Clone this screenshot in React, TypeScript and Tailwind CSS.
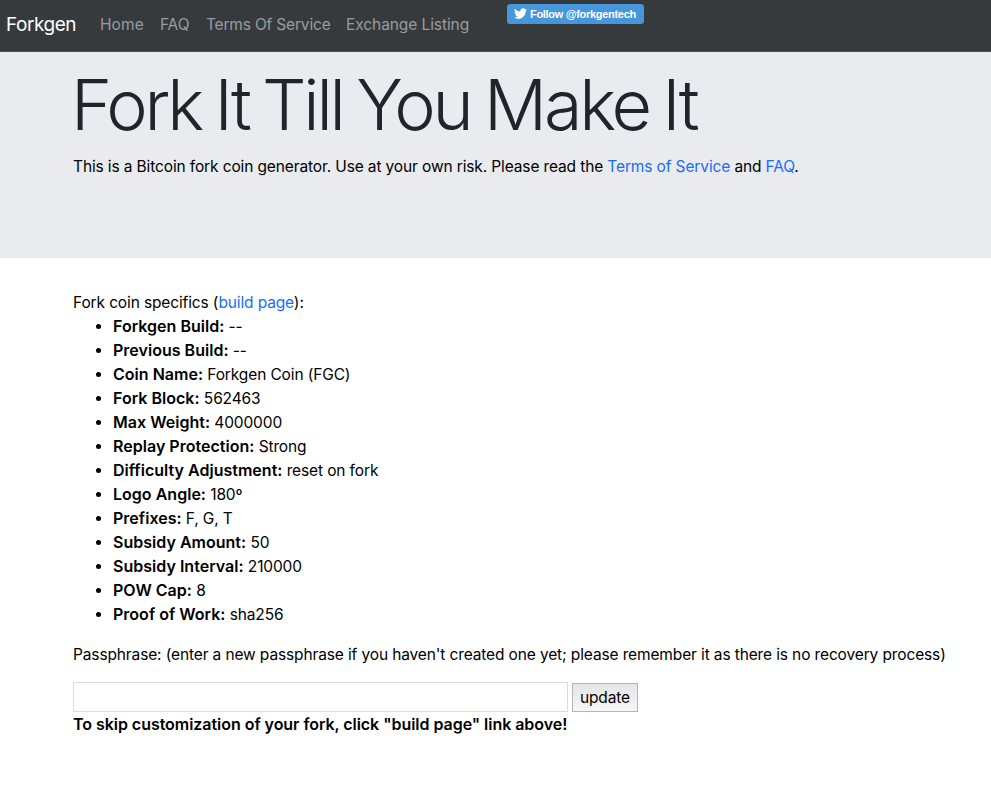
const specs = [
  ["Forkgen Build:", "--"],
  ["Previous Build:", "--"],
  ["Coin Name:", "Forkgen Coin (FGC)"],
  ["Fork Block:", "562463"],
  ["Max Weight:", "4000000"],
  ["Replay Protection:", "Strong"],
  ["Difficulty Adjustment:", "reset on fork"],
  ["Logo Angle:", "180º"],
  ["Prefixes:", "F, G, T"],
  ["Subsidy Amount:", "50"],
  ["Subsidy Interval:", "210000"],
  ["POW Cap:", "8"],
  ["Proof of Work:", "sha256"],
];

export default function App() {
  return (
    <div className="h-[787px] w-[991px] overflow-hidden bg-white font-['Inter',sans-serif] text-[15.5px] leading-6 tracking-[-0.127px] text-black">
      <nav className="flex h-[52px] items-center border-b border-[#505256] bg-[#363a3d] pb-px pl-[6px] text-[#999c9f]">
        <a className="w-[94px] text-[19px] tracking-[-0.45px] text-white">Forkgen</a>
        <a className="w-[60px] tracking-[0.1px]">Home</a>
        <a className="w-[46px]">FAQ</a>
        <a className="w-[140px] tracking-[-0.18px]">Terms Of Service</a>
        <a className="w-[161px] tracking-[-0.08px]">Exchange Listing</a>
        <a className="mb-[23px] flex h-5 w-[137px] items-center gap-[3px] whitespace-nowrap rounded-[3px] bg-[#4596db] pl-[7px] font-['Liberation_Sans',sans-serif] text-[11px] font-bold tracking-[-0.3px] text-white">
          <svg viewBox="0 0 24 24" className="h-[13px] w-[13px] shrink-0 fill-white"><path d="M23.954 4.569c-.885.389-1.83.654-2.825.775 1.014-.611 1.794-1.574 2.163-2.723-.951.555-2.005.959-3.127 1.184-.896-.959-2.173-1.559-3.591-1.559-2.717 0-4.92 2.203-4.92 4.917 0 .39.045.765.127 1.124C7.691 8.094 4.066 6.13 1.64 3.161c-.427.722-.666 1.561-.666 2.475 0 1.71.87 3.213 2.188 4.096-.807-.026-1.566-.248-2.228-.616v.061c0 2.385 1.693 4.374 3.946 4.827-.413.111-.849.171-1.296.171-.314 0-.615-.03-.916-.086.631 1.953 2.445 3.377 4.604 3.417-1.68 1.319-3.809 2.105-6.102 2.105-.39 0-.779-.023-1.17-.067 2.189 1.394 4.768 2.209 7.557 2.209 9.054 0 13.999-7.496 13.999-13.986 0-.209 0-.42-.015-.63.961-.689 1.8-1.56 2.46-2.548z" /></svg>
          <span>Follow @forkgentech</span>
        </a>
      </nav>
      <header className="h-[206px] bg-[#e9ebef] px-[73px] pt-[15px]">
        <h1 className="-ml-0.5 text-[70px] font-light leading-[75px] tracking-[-3.2px] text-[#212529] [word-spacing:-3px]">Fork It Till You Make It</h1>
        <p className="mt-[13px] whitespace-nowrap">This is a Bitcoin fork coin generator. Use at your own risk. Please read the <a className="text-[#156dff]">Terms of Service</a> and <a className="text-[#156dff]">FAQ</a>.</p>
      </header>
      <main className="px-[73px] pt-[33px]">
        <p>Fork coin specifics (<a className="text-[#156dff]">build page</a>):</p>
        <ul className="list-disc pl-10">
          {specs.map(([k, v]) => <li key={k} className="h-6"><b className="text-[16px] leading-none font-semibold tracking-[0.02px]">{k}</b> {v}</li>)}
        </ul>
        <p className="mt-4 whitespace-nowrap">Passphrase: (enter a new passphrase if you haven't created one yet; please remember it as there is no recovery process)</p>
        <div className="mt-[15px] flex h-[30px] gap-1">
          <input className="h-[30px] w-[495px] border border-[#dcdcdc]" />
          <button className="mt-px flex h-[29px] w-[66px] items-center justify-center border border-[#b4b6b4] bg-linear-to-b from-[#e6e6e6] to-[#f6f6f6] pt-px">update</button>
        </div>
        <p className="text-[16px] font-semibold tracking-[-0.04px]">To skip customization of your fork, click "build page" link above!</p>
      </main>
    </div>
  );
}
